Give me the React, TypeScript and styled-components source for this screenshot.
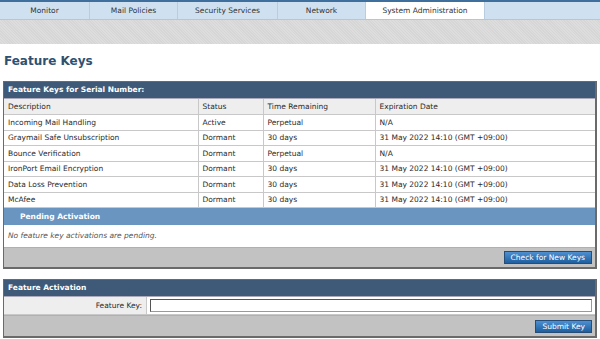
import styled, { createGlobalStyle } from "styled-components";

const GlobalStyle = createGlobalStyle`
  html, body { margin: 0; padding: 0; background: #fff; }
  body { font-family: "DejaVu Sans", Verdana, sans-serif; font-size: 7.5px; color: #2a2a2a; }
`;

const tabs = ["Monitor", "Mail Policies", "Security Services", "Network", "System Administration"];
const tabWidths = [90, 88, 100, 88, 119];

const keys = [
  ["Incoming Mail Handling", "Active", "Perpetual", "N/A"],
  ["Graymail Safe Unsubscription", "Dormant", "30 days", "31 May 2022 14:10 (GMT +09:00)"],
  ["Bounce Verification", "Dormant", "Perpetual", "N/A"],
  ["IronPort Email Encryption", "Dormant", "30 days", "31 May 2022 14:10 (GMT +09:00)"],
  ["Data Loss Prevention", "Dormant", "30 days", "31 May 2022 14:10 (GMT +09:00)"],
  ["McAfee", "Dormant", "30 days", "31 May 2022 14:10 (GMT +09:00)"],
];

const App = () => {
  return (
    <Page>
      <GlobalStyle />
      <TopLine />
      <TabBar>
        {tabs.map((t, i) => (
          <Tab key={t} $active={i === 4} style={{ width: tabWidths[i] }}>
            {t}
          </Tab>
        ))}
      </TabBar>
      <Band />
      <Title>Feature Keys</Title>

      <Box>
        <BoxHeader>Feature Keys for Serial Number:</BoxHeader>
        <Table>
          <colgroup>
            <col style={{ width: 194 }} />
            <col style={{ width: 65 }} />
            <col style={{ width: 112 }} />
            <col />
          </colgroup>
          <thead>
            <tr>
              <Th>Description</Th>
              <Th>Status</Th>
              <Th>Time Remaining</Th>
              <Th>Expiration Date</Th>
            </tr>
          </thead>
          <tbody>
            {keys.map((r) => (
              <tr key={r[0]}>
                {r.map((c, i) => (
                  <Td key={i}>{c}</Td>
                ))}
              </tr>
            ))}
          </tbody>
        </Table>
        <SubHeader>Pending Activation</SubHeader>
        <EmptyNote>No feature key activations are pending.</EmptyNote>
        <Footer $h={19}>
          <Button>Check for New Keys</Button>
        </Footer>
      </Box>

      <Box $gap>
        <BoxHeader>Feature Activation</BoxHeader>
        <FormRow>
          <Label>Feature Key:</Label>
          <InputCell>
            <KeyInput type="text" />
          </InputCell>
        </FormRow>
        <Footer $h={20}>
          <Button>Submit Key</Button>
        </Footer>
      </Box>
    </Page>
  );
};

export default App;

const Page = styled.div`
  width: 600px;
  height: 339px;
  overflow: hidden;
`;
const TopLine = styled.div`
  height: 2px;
  background: #3f6f9c;
`;
const TabBar = styled.div`
  display: flex;
  height: 17px;
  background: #cfe1f0;
  border-bottom: 1px solid #b9c6d2;
`;
const Tab = styled.div<{ $active?: boolean }>`
  display: flex;
  align-items: center;
  justify-content: center;
  background: ${(p) => (p.$active ? "#fff" : "transparent")};
  border-right: 1px solid #b8cde0;
  color: #333;
  font-size: 7.5px;
  box-sizing: border-box;
`;
const Band = styled.div`
  height: 24px;
  background-color: #d6d6d6;
  background-image: repeating-linear-gradient(45deg, rgba(255,255,255,0.18) 0 1px, transparent 1px 2px);
`;
const Title = styled.h1`
  margin: 0;
  padding: 10px 0 0 4px;
  height: 29px;
  box-sizing: border-box;
  font-size: 12px;
  font-weight: bold;
  color: #2d5173;
`;
const Box = styled.div<{ $gap?: boolean }>`
  margin: ${(p) => (p.$gap ? "10px" : "8px")} 3px 0 3px;
  border: 1px solid #6a6a6a;
  border-bottom-width: 2px;
  border-right-width: 2px;
`;
const BoxHeader = styled.div`
  height: 16px;
  line-height: 16px;
  padding-left: 4px;
  background: #3e5a78;
  color: #fff;
  font-weight: bold;
  border-bottom: 1px solid #aab;
`;
const Table = styled.table`
  width: 100%;
  border-collapse: collapse;
  table-layout: fixed;
`;
const Th = styled.th`
  text-align: left;
  font-weight: normal;
  background: #eeeeee;
  height: 15px;
  padding: 0 0 0 4px;
  border: 1px solid #c8c8c8;
  border-top: none;
  &:first-child { border-left: none; }
  &:last-child { border-right: none; }
`;
const Td = styled.td`
  height: 14.5px;
  padding: 0 0 0 4px;
  border: 1px solid #c8c8c8;
  white-space: nowrap;
  &:first-child { border-left: none; }
  &:last-child { border-right: none; }
`;
const SubHeader = styled.div`
  height: 17px;
  line-height: 17px;
  padding-left: 16px;
  background: #6a95c1;
  color: #fff;
  font-weight: bold;
`;
const EmptyNote = styled.div`
  height: 22px;
  line-height: 22px;
  padding-left: 4px;
  font-style: italic;
  color: #555;
`;
const Footer = styled.div<{ $h: number }>`
  height: ${(p) => p.$h}px;
  background: #c2c2c2;
  border-top: 1px solid #b0b0b0;
  display: flex;
  align-items: center;
  justify-content: flex-end;
  padding-right: 3px;
`;
const Button = styled.button`
  height: 13px;
  padding: 0 6px;
  font-family: "DejaVu Sans", Verdana, sans-serif;
  font-size: 7.5px;
  color: #fff;
  background: linear-gradient(#4d8fd0, #1f5f9f);
  border: 1px solid #254d78;
  border-radius: 0;
  line-height: 11px;
`;
const FormRow = styled.div`
  display: flex;
  height: 17px;
  border-bottom: 1px solid #c8c8c8;
`;
const Label = styled.div`
  width: 143px;
  background: #eeeeee;
  border-right: 1px solid #c8c8c8;
  display: flex;
  align-items: center;
  justify-content: flex-end;
  padding-right: 4px;
  box-sizing: border-box;
`;
const InputCell = styled.div`
  flex: 1;
  display: flex;
  align-items: center;
  padding: 0 3px 0 3px;
`;
const KeyInput = styled.input`
  width: 100%;
  height: 13px;
  box-sizing: border-box;
  border: 1px solid #999;
  border-top-color: #555;
  border-left-color: #555;
  padding: 0;
  margin: 0;
`;
